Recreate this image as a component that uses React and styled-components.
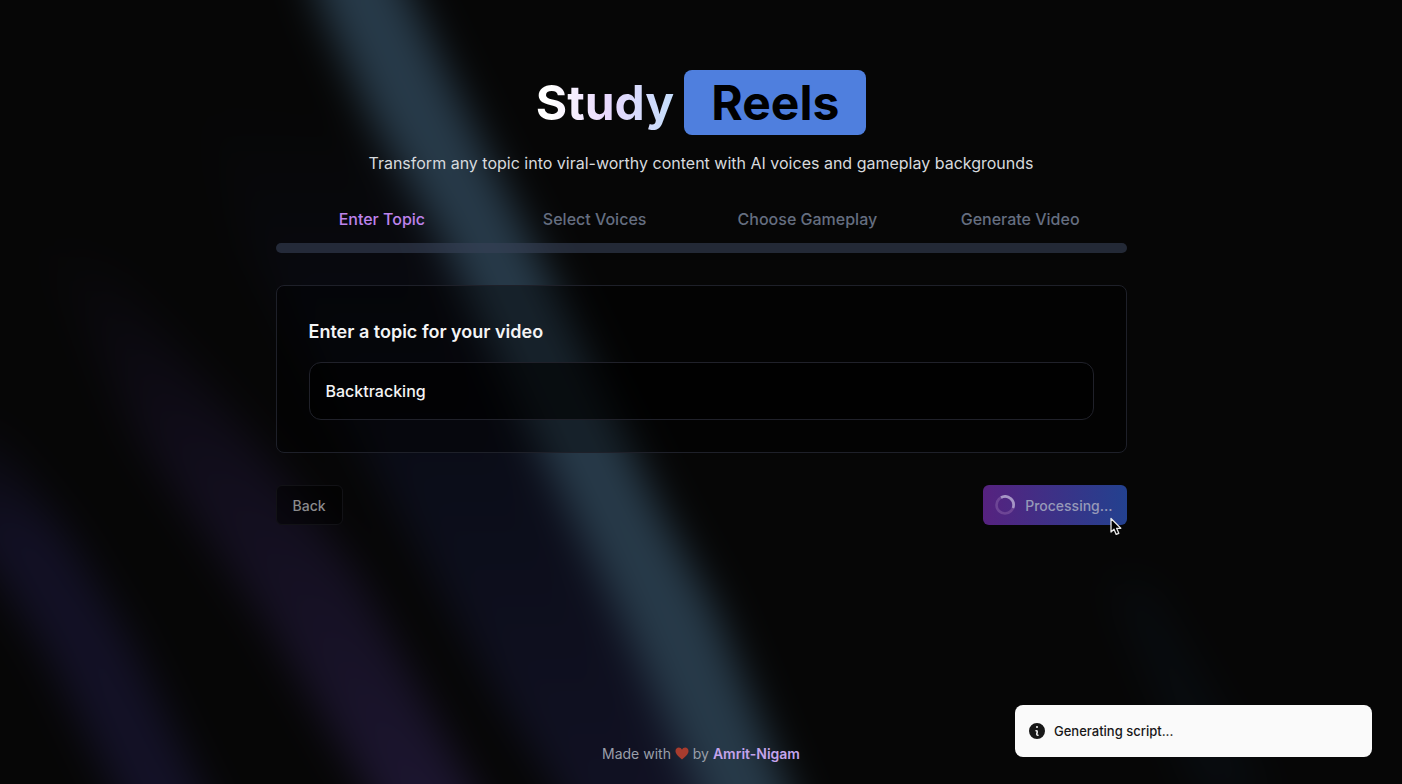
import { useState } from "react";
import styled, { createGlobalStyle } from "styled-components";

const steps = ["Enter Topic", "Select Voices", "Choose Gameplay", "Generate Video"];

const GlobalStyle = createGlobalStyle`
  * {
    box-sizing: border-box;
  }
  body {
    margin: 0;
    background: #060606;
    color: #f4f4f5;
    font-family: Inter, "Liberation Sans", sans-serif;
    font-size: 16px;
  }
`;

const Page = styled.div`
  position: relative;
  min-height: 100vh;
  display: flex;
  flex-direction: column;
  align-items: center;
  padding: 70px 24px 20px;
  overflow: hidden;
`;

const Aurora = styled.svg`
  position: absolute;
  inset: 0;
  width: 100%;
  height: 100%;
`;

const Main = styled.main`
  position: relative;
  width: 100%;
  max-width: 851px;
`;

const Header = styled.header`
  display: flex;
  flex-direction: column;
  align-items: center;
  gap: 16px;
`;

const Title = styled.h1`
  display: flex;
  align-items: center;
  gap: 10px;
  margin: 0;
  font-size: 48px;
  line-height: 65px;
  font-weight: 700;
`;

const TitleText = styled.span`
  background: linear-gradient(to right, #ffffff 10%, #e9d8fd 50%, #c4ddfb);
  background-clip: text;
  color: transparent;
`;

const TitleBadge = styled.span`
  padding: 0 27px;
  border-radius: 8px;
  background: #4f7fde;
  color: #000;
`;

const Subtitle = styled.p`
  margin: 0;
  line-height: 24px;
  color: #d7dade;
  text-align: center;
`;

const StepList = styled.ol`
  display: grid;
  grid-template-columns: repeat(4, 1fr);
  margin: 32px 0 12px;
  padding: 0;
  list-style: none;
  line-height: 24px;
  text-align: center;
`;

const Step = styled.li`
  color: ${(props) => (props.$active ? "#bd83ec" : "#656e80")};
  font-weight: 500;
`;

const ProgressTrack = styled.div`
  height: 10px;
  border-radius: 5px;
  background: rgba(55, 65, 86, 0.6);
`;

const Card = styled.section`
  margin-top: 32px;
  padding: 32px;
  border: 1px solid #1e2029;
  border-radius: 8px;
  background: rgba(0, 0, 0, 0.4);
`;

const Label = styled.label`
  display: block;
  margin-bottom: 16px;
  font-size: 18px;
  line-height: 28px;
  font-weight: 600;
`;

const TopicInput = styled.input`
  display: block;
  width: 100%;
  height: 58px;
  padding: 0 16px;
  border: 1px solid #20212a;
  border-radius: 12px;
  outline: none;
  background: rgba(0, 0, 0, 0.6);
  color: #f4f4f5;
  font: inherit;
  font-weight: 500;
`;

const Actions = styled.div`
  display: flex;
  justify-content: space-between;
  margin-top: 32px;
`;

const Button = styled.button`
  display: flex;
  align-items: center;
  gap: 10px;
  height: 40px;
  padding: 0 16px;
  border: 1px solid #121216;
  border-radius: 6px;
  background: rgba(0, 0, 0, 0.5);
  color: #8b8b8d;
  font: inherit;
  font-size: 14px;
  font-weight: 500;
`;

const PrimaryButton = styled(Button)`
  position: relative;
  padding: 0 14px 0 12px;
  border: 0;
  background: linear-gradient(to right, #56227f, #23418f);
  color: #9699b8;
`;

const Cursor = styled.svg`
  position: absolute;
  right: 5px;
  bottom: -11px;
`;

const Footer = styled.footer`
  position: relative;
  margin-top: auto;
  font-size: 14px;
  line-height: 20px;
  color: #9a9fa9;
`;

const Heart = styled.svg`
  vertical-align: -1px;
`;

const AuthorLink = styled.a`
  color: #c4a4ec;
  font-weight: 600;
  text-decoration: none;
`;

const Toast = styled.div`
  position: fixed;
  right: 30px;
  bottom: 27px;
  display: flex;
  align-items: center;
  gap: 7px;
  width: 357px;
  height: 52px;
  padding: 0 12px;
  border-radius: 8px;
  background: #fafafa;
  color: #171717;
  font-size: 13px;
  font-weight: 500;
`;

const Background = () => (
  <Aurora viewBox="0 0 1402 784" preserveAspectRatio="none" aria-hidden="true">
    <defs>
      <filter
        id="soft"
        filterUnits="userSpaceOnUse"
        x="-100"
        y="-100"
        width="1602"
        height="984"
        colorInterpolationFilters="sRGB"
      >
        <feGaussianBlur stdDeviation="20" />
      </filter>
      <linearGradient id="violet" x1="0" y1="0" x2="0" y2="1">
        <stop offset="0" stopColor="#060606" />
        <stop offset="0.4" stopColor="#120e1d" />
        <stop offset="1" stopColor="#1e1733" />
      </linearGradient>
      <linearGradient id="navy" x1="0" y1="0" x2="0" y2="1">
        <stop offset="0" stopColor="#060606" />
        <stop offset="0.5" stopColor="#0b0d19" />
        <stop offset="1" stopColor="#121225" />
      </linearGradient>
      <linearGradient id="indigo" x1="0" y1="0" x2="0" y2="1">
        <stop offset="0" stopColor="#060606" />
        <stop offset="0.3" stopColor="#121024" />
        <stop offset="1" stopColor="#141228" />
      </linearGradient>
    </defs>
    <g filter="url(#soft)">
      <rect x="-200" y="-200" width="1802" height="1184" fill="#060606" />
      <path d="M200 100 L400 150 L560 470 L740 860 L600 860 L500 700 L380 480 L250 250 Z" fill="url(#navy)" />
      <path d="M40 230 L120 280 L245 430 L355 570 L510 860 L410 860 L265 620 L140 440 Z" fill="url(#violet)" />
      <path d="M-80 400 L0 440 L70 540 L130 640 L235 860 L150 860 L50 660 L0 580 L-80 480 Z" fill="url(#indigo)" />
      <path d="M1110 580 L1150 590 L1270 800 L1200 800 Z" fill="#080c10" />
      <path d="M298 -100 L385 -60 L412 0 L475 130 L550 280 L612 410 L660 510 L715 610 L812 850 L724 850 L618 610 L560 490 L437 230 L372 120 L318 0 Z" fill="#273a49" />
    </g>
  </Aurora>
);

const Spinner = () => (
  <svg width="20" height="20" viewBox="0 0 20 20" fill="none" aria-hidden="true">
    <circle cx="10" cy="10" r="8.5" stroke="#6d4595" strokeWidth="2.6" />
    <path d="M6 2.5 A8.5 8.5 0 0 1 18 13" stroke="#a696c6" strokeWidth="2.6" />
  </svg>
);

const InfoIcon = () => (
  <svg width="20" height="20" viewBox="0 0 20 20" fill="currentColor" aria-hidden="true">
    <path
      fillRule="evenodd"
      clipRule="evenodd"
      d="M18 10a8 8 0 1 1-16 0 8 8 0 0 1 16 0Zm-7-4a1 1 0 1 1-2 0 1 1 0 0 1 2 0ZM9 9a.75.75 0 0 0 0 1.5h.253a.25.25 0 0 1 .244.304l-.459 2.066A1.75 1.75 0 0 0 10.747 15H11a.75.75 0 0 0 0-1.5h-.253a.25.25 0 0 1-.244-.304l.459-2.066A1.75 1.75 0 0 0 9.253 9H9Z"
    />
  </svg>
);

const App = () => {
  const [topic, setTopic] = useState("Backtracking");

  return (
    <Page>
      <GlobalStyle />
      <Background />
      <Main>
        <Header>
          <Title>
            <TitleText>Study</TitleText>
            <TitleBadge>Reels</TitleBadge>
          </Title>
          <Subtitle>Transform any topic into viral-worthy content with AI voices and gameplay backgrounds</Subtitle>
        </Header>
        <StepList>
          {steps.map((step, i) => (
            <Step key={step} $active={i === 0}>{step}</Step>
          ))}
        </StepList>
        <ProgressTrack />
        <Card>
          <Label htmlFor="topic">Enter a topic for your video</Label>
          <TopicInput id="topic" type="text" value={topic} onChange={(e) => setTopic(e.target.value)} />
        </Card>
        <Actions>
          <Button type="button" disabled>Back</Button>
          <PrimaryButton type="button" disabled>
            <Spinner />
            Processing...
            <Cursor width="12" height="19" viewBox="0 0 12 19" aria-hidden="true">
              <path
                d="M1 1.5 V15 L4 12.2 L6.2 17.4 L8.8 16.3 L6.6 11.3 H10.8 Z"
                fill="#000"
                stroke="#e8e8e8"
                strokeWidth="1.3"
                strokeLinejoin="round"
              />
            </Cursor>
          </PrimaryButton>
        </Actions>
      </Main>
      <Footer>
        Made with{" "}
        <Heart width="14" height="13" viewBox="0 0 14 13" aria-label="love">
          <path
            d="M7 12.5 C4 10 .5 7.3 .5 4 C.5 1.9 2 .6 3.8 .6 C5.2 .6 6.4 1.4 7 2.7 C7.6 1.4 8.8 .6 10.2 .6 C12 .6 13.5 1.9 13.5 4 C13.5 7.3 10 10 7 12.5 Z"
            fill="#a83c2e"
          />
        </Heart>{" "}
        by <AuthorLink href="#author">Amrit-Nigam</AuthorLink>
      </Footer>
      <Toast role="status">
        <InfoIcon />
        Generating script...
      </Toast>
    </Page>
  );
};

export default App;
